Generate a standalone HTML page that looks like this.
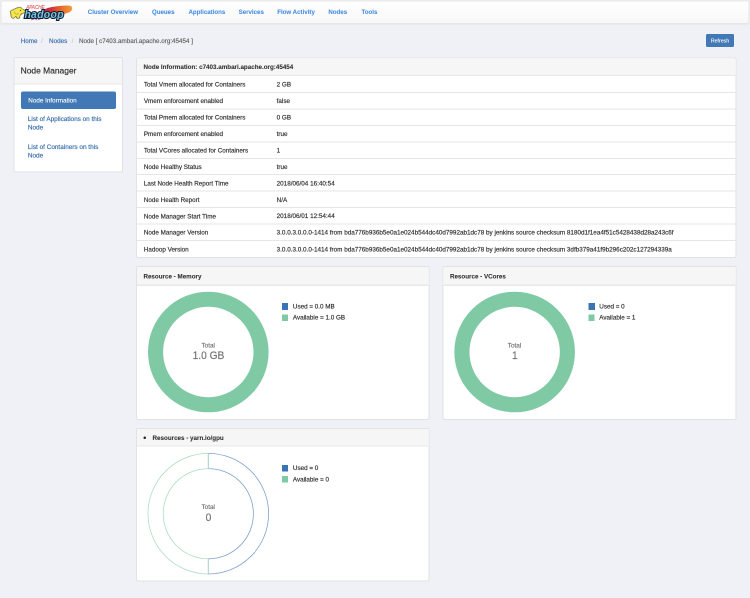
<!DOCTYPE html>
<html><head><meta charset="utf-8">
<style>
*{box-sizing:border-box;margin:0;padding:0}
html,body{width:750px;height:598px;overflow:hidden;background:#f0f1f6}
body{font-family:"Liberation Sans",sans-serif;color:#333;position:relative}
#wrap{position:absolute;left:0;top:0;width:1500px;height:1196px;transform:scale(.5);transform-origin:0 0;will-change:transform;filter:blur(0.7px)}
#z{zoom:2;position:relative;width:750px;height:598px}
.t{position:absolute;white-space:nowrap;-webkit-text-stroke-width:0.18px}
.b{position:absolute}
</style></head><body>
<div id="wrap"><div id="z">
<div class="b" style="left:0.40px;top:0.50px;width:749.20px;height:23.30px;background:linear-gradient(#fff,#f8f8f8);border:1px solid #e6e6e8;border-radius:2px;box-shadow:0 0.6px 1px rgba(0,0,0,.035)"></div>
<span class="t" data-yb="13.85" style="left:87.75px;top:7.96px;font-size:6.15px;line-height:8.61px;color:#4a8fe0;font-weight:bold;-webkit-text-stroke-width:0.08px;">Cluster Overview</span>
<span class="t" data-yb="13.85" style="left:151.95px;top:7.96px;font-size:6.15px;line-height:8.61px;color:#4a8fe0;font-weight:bold;-webkit-text-stroke-width:0.08px;">Queues</span>
<span class="t" data-yb="13.85" style="left:188.45px;top:7.96px;font-size:6.15px;line-height:8.61px;color:#4a8fe0;font-weight:bold;-webkit-text-stroke-width:0.08px;">Applications</span>
<span class="t" data-yb="13.85" style="left:238.60px;top:7.96px;font-size:6.15px;line-height:8.61px;color:#4a8fe0;font-weight:bold;-webkit-text-stroke-width:0.08px;">Services</span>
<span class="t" data-yb="13.85" style="left:277.20px;top:7.96px;font-size:6.15px;line-height:8.61px;color:#4a8fe0;font-weight:bold;-webkit-text-stroke-width:0.08px;">Flow Activity</span>
<span class="t" data-yb="13.85" style="left:328.35px;top:7.96px;font-size:6.15px;line-height:8.61px;color:#4a8fe0;font-weight:bold;-webkit-text-stroke-width:0.08px;">Nodes</span>
<span class="t" data-yb="13.85" style="left:361.50px;top:7.96px;font-size:6.15px;line-height:8.61px;color:#4a8fe0;font-weight:bold;-webkit-text-stroke-width:0.08px;">Tools</span>
<span class="t" data-yb="43.0" style="left:20.75px;top:37.01px;font-size:6.25px;line-height:8.75px;color:#3c71ae;">Home</span>
<span class="t" data-yb="43.0" style="left:41.10px;top:37.06px;font-size:6.2px;line-height:8.68px;color:#c9c9c9;">/</span>
<span class="t" data-yb="43.0" style="left:49.05px;top:36.96px;font-size:6.3px;line-height:8.82px;color:#3c71ae;">Nodes</span>
<span class="t" data-yb="43.0" style="left:71.60px;top:37.06px;font-size:6.2px;line-height:8.68px;color:#c9c9c9;">/</span>
<span class="t" data-yb="43.0" style="left:78.95px;top:36.98px;font-size:6.28px;line-height:8.79px;color:#666;">Node [ c7403.ambari.apache.org:45454 ]</span>
<div class="b" style="left:705.90px;top:33.80px;width:28.10px;height:13.10px;background:#4178b5;border-radius:1.5px"></div>
<span class="t" data-yb="42.35" style="left:660.00px;width:120px;text-align:center;top:37.46px;font-size:5.2px;line-height:7.28px;color:#fff;-webkit-text-stroke-width:0.08px">Refresh</span>
<div class="b" style="left:13.50px;top:57.00px;width:109.70px;height:115.30px;background:#fff;border:1px solid #e2e2e4;border-radius:2px"></div>
<div class="b" style="left:14.50px;top:58.00px;width:107.70px;height:26.30px;background:#f6f6f6;border-bottom:1px solid #e8e8e8;border-radius:1.5px 1.5px 0 0"></div>
<span class="t" data-yb="73.3" style="left:20.60px;top:65.01px;font-size:8.45px;line-height:11.83px;color:#333;">Node Manager</span>
<div class="b" style="left:20.90px;top:91.30px;width:95.10px;height:17.60px;background:#4178b5;border-radius:2px"></div>
<span class="t" data-yb="102.6" style="left:28.30px;top:96.56px;font-size:6.3px;line-height:8.82px;color:#fff;-webkit-text-stroke-width:0.12px">Node Information</span>
<span class="t" data-yb="120.7" style="left:27.85px;top:114.55px;font-size:6.4px;line-height:8.96px;color:#3c71ae;">List of Applications on this</span>
<span class="t" data-yb="129.3" style="left:27.85px;top:123.15px;font-size:6.4px;line-height:8.96px;color:#3c71ae;">Node</span>
<span class="t" data-yb="148.4" style="left:27.85px;top:142.25px;font-size:6.4px;line-height:8.96px;color:#3c71ae;">List of Containers on this</span>
<span class="t" data-yb="157.0" style="left:27.85px;top:150.85px;font-size:6.4px;line-height:8.96px;color:#3c71ae;">Node</span>
<div class="b" style="left:136.20px;top:57.40px;width:600.40px;height:200.80px;background:#fff;border:1px solid #e2e2e4;border-radius:2px"></div>
<div class="b" style="left:137.20px;top:58.40px;width:598.40px;height:17.60px;background:#f6f6f6;border-bottom:1px solid #e8e8e8;border-radius:1.5px 1.5px 0 0"></div>
<span class="t" data-yb="69.0" style="left:143.55px;top:63.01px;font-size:6.25px;line-height:8.75px;color:#333;font-weight:bold;-webkit-text-stroke-width:0.08px;">Node Information: c7403.ambari.apache.org:45454</span>
<div class="b" style="left:137.20px;top:92.00px;width:598.40px;height:1.00px;background:#e6e6e6"></div>
<div class="b" style="left:137.20px;top:108.44px;width:598.40px;height:1.00px;background:#e6e6e6"></div>
<div class="b" style="left:137.20px;top:124.88px;width:598.40px;height:1.00px;background:#e6e6e6"></div>
<div class="b" style="left:137.20px;top:141.32px;width:598.40px;height:1.00px;background:#e6e6e6"></div>
<div class="b" style="left:137.20px;top:157.76px;width:598.40px;height:1.00px;background:#e6e6e6"></div>
<div class="b" style="left:137.20px;top:174.20px;width:598.40px;height:1.00px;background:#e6e6e6"></div>
<div class="b" style="left:137.20px;top:190.64px;width:598.40px;height:1.00px;background:#e6e6e6"></div>
<div class="b" style="left:137.20px;top:207.08px;width:598.40px;height:1.00px;background:#e6e6e6"></div>
<div class="b" style="left:137.20px;top:223.52px;width:598.40px;height:1.00px;background:#e6e6e6"></div>
<div class="b" style="left:137.20px;top:239.96px;width:598.40px;height:1.00px;background:#e6e6e6"></div>
<span class="t" data-yb="86.51" style="left:143.85px;top:80.47px;font-size:6.3px;line-height:8.82px;color:#333;">Total Vmem allocated for Containers</span>
<span class="t" data-yb="86.51" style="left:276.65px;top:80.44px;font-size:6.33px;line-height:8.86px;color:#333;">2 GB</span>
<span class="t" data-yb="103.23" style="left:143.85px;top:97.19px;font-size:6.3px;line-height:8.82px;color:#333;">Vmem enforcement enabled</span>
<span class="t" data-yb="103.23" style="left:276.65px;top:97.16px;font-size:6.33px;line-height:8.86px;color:#333;">false</span>
<span class="t" data-yb="119.67" style="left:143.85px;top:113.63px;font-size:6.3px;line-height:8.82px;color:#333;">Total Pmem allocated for Containers</span>
<span class="t" data-yb="119.67" style="left:276.65px;top:113.60px;font-size:6.33px;line-height:8.86px;color:#333;">0 GB</span>
<span class="t" data-yb="136.10999999999999" style="left:143.85px;top:130.07px;font-size:6.3px;line-height:8.82px;color:#333;">Pmem enforcement enabled</span>
<span class="t" data-yb="136.10999999999999" style="left:276.65px;top:130.04px;font-size:6.33px;line-height:8.86px;color:#333;">true</span>
<span class="t" data-yb="152.54999999999998" style="left:143.85px;top:146.51px;font-size:6.3px;line-height:8.82px;color:#333;">Total VCores allocated for Containers</span>
<span class="t" data-yb="152.54999999999998" style="left:276.65px;top:146.48px;font-size:6.33px;line-height:8.86px;color:#333;">1</span>
<span class="t" data-yb="168.98999999999998" style="left:143.85px;top:162.95px;font-size:6.3px;line-height:8.82px;color:#333;">Node Healthy Status</span>
<span class="t" data-yb="168.98999999999998" style="left:276.65px;top:162.92px;font-size:6.33px;line-height:8.86px;color:#333;">true</span>
<span class="t" data-yb="185.43" style="left:143.85px;top:179.39px;font-size:6.3px;line-height:8.82px;color:#333;">Last Node Health Report Time</span>
<span class="t" data-yb="185.43" style="left:276.65px;top:179.36px;font-size:6.33px;line-height:8.86px;color:#333;">2018/06/04 16:40:54</span>
<span class="t" data-yb="201.87" style="left:143.85px;top:195.83px;font-size:6.3px;line-height:8.82px;color:#333;">Node Health Report</span>
<span class="t" data-yb="201.87" style="left:276.65px;top:195.80px;font-size:6.33px;line-height:8.86px;color:#333;">N/A</span>
<span class="t" data-yb="218.31" style="left:143.85px;top:212.27px;font-size:6.3px;line-height:8.82px;color:#333;">Node Manager Start Time</span>
<span class="t" data-yb="218.31" style="left:276.65px;top:212.24px;font-size:6.33px;line-height:8.86px;color:#333;">2018/06/01 12:54:44</span>
<span class="t" data-yb="234.75" style="left:143.85px;top:228.71px;font-size:6.3px;line-height:8.82px;color:#333;">Node Manager Version</span>
<span class="t" data-yb="234.75" style="left:276.65px;top:228.68px;font-size:6.33px;line-height:8.86px;color:#333;">3.0.0.3.0.0.0-1414 from bda776b936b5e0a1e024b544dc40d7992ab1dc78 by jenkins source checksum 8180d1f1ea4f51c5428438d28a243c6f</span>
<span class="t" data-yb="251.58999999999997" style="left:143.85px;top:245.55px;font-size:6.3px;line-height:8.82px;color:#333;">Hadoop Version</span>
<span class="t" data-yb="251.58999999999997" style="left:276.65px;top:245.52px;font-size:6.33px;line-height:8.86px;color:#333;">3.0.0.3.0.0.0-1414 from bda776b936b5e0a1e024b544dc40d7992ab1dc78 by jenkins source checksum 3dfb379a41f9b296c202c127294339a</span>
<div class="b" style="left:136.20px;top:266.10px;width:293.50px;height:154.00px;background:#fff;border:1px solid #e2e2e4;border-radius:2px"></div>
<div class="b" style="left:137.20px;top:267.10px;width:291.50px;height:18.40px;background:#f6f6f6;border-bottom:1px solid #e8e8e8;border-radius:1.5px 1.5px 0 0"></div>
<span class="t" data-yb="278.26" style="left:143.45px;top:272.27px;font-size:6.25px;line-height:8.75px;color:#333;font-weight:bold;-webkit-text-stroke-width:0.08px;">Resource - Memory</span>
<div class="b" style="left:442.50px;top:266.10px;width:294.10px;height:154.00px;background:#fff;border:1px solid #e2e2e4;border-radius:2px"></div>
<div class="b" style="left:443.50px;top:267.10px;width:292.10px;height:18.40px;background:#f6f6f6;border-bottom:1px solid #e8e8e8;border-radius:1.5px 1.5px 0 0"></div>
<span class="t" data-yb="278.26" style="left:449.95px;top:272.27px;font-size:6.25px;line-height:8.75px;color:#333;font-weight:bold;-webkit-text-stroke-width:0.08px;">Resource - VCores</span>
<div class="b" style="left:136.20px;top:428.10px;width:293.40px;height:153.40px;background:#fff;border:1px solid #e2e2e4;border-radius:2px"></div>
<div class="b" style="left:137.20px;top:429.10px;width:291.40px;height:17.60px;background:#f6f6f6;border-bottom:1px solid #e8e8e8;border-radius:1.5px 1.5px 0 0"></div>
<div class="b" style="left:143.35px;top:436.55px;width:2.50px;height:2.50px;background:#222;border-radius:50%"></div>
<span class="t" data-yb="439.85999999999996" style="left:152.55px;top:433.87px;font-size:6.25px;line-height:8.75px;color:#333;font-weight:bold;-webkit-text-stroke-width:0.08px;">Resources - yarn.io/gpu</span>
<svg class="b" style="left:0;top:0" width="750" height="598" viewBox="0 0 750 598"><circle cx="208.3" cy="352" r="52.75" fill="none" stroke="#7fcaa4" stroke-width="15.1"/><circle cx="514.65" cy="352" r="52.75" fill="none" stroke="#7fcaa4" stroke-width="15.1"/><path d="M208.3 453.40000000000003 A60.3 60.3 0 0 1 208.3 574.0 L208.3 558.8000000000001 A45.1 45.1 0 0 0 208.3 468.6 Z" fill="none" stroke="#82a2cd" stroke-width="0.8"/><path d="M208.3 574.0 A60.3 60.3 0 0 1 208.3 453.40000000000003 L208.3 468.6 A45.1 45.1 0 0 0 208.3 558.8000000000001 Z" fill="none" stroke="#a9dcc1" stroke-width="0.75"/></svg>
<span class="t" data-yb="347.5" style="left:148.20px;width:120px;text-align:center;top:341.40px;font-size:6.35px;line-height:8.89px;color:#747474;transform:scaleY(1.05);transform-origin:50% 6.10px;">Total</span>
<span class="t" data-yb="358.7" style="left:148.50px;width:120px;text-align:center;top:348.58px;font-size:10.2px;line-height:14.28px;color:#747474;transform:scaleY(1.1);transform-origin:50% 10.12px;">1.0 GB</span>
<span class="t" data-yb="347.5" style="left:454.50px;width:120px;text-align:center;top:341.40px;font-size:6.35px;line-height:8.89px;color:#747474;transform:scaleY(1.05);transform-origin:50% 6.10px;">Total</span>
<span class="t" data-yb="358.7" style="left:454.80px;width:120px;text-align:center;top:348.58px;font-size:10.2px;line-height:14.28px;color:#747474;transform:scaleY(1.1);transform-origin:50% 10.12px;">1</span>
<span class="t" data-yb="509.2" style="left:148.20px;width:120px;text-align:center;top:503.10px;font-size:6.35px;line-height:8.89px;color:#747474;transform:scaleY(1.05);transform-origin:50% 6.10px;">Total</span>
<span class="t" data-yb="520.4" style="left:148.50px;width:120px;text-align:center;top:510.28px;font-size:10.2px;line-height:14.28px;color:#747474;transform:scaleY(1.1);transform-origin:50% 10.12px;">0</span>
<div class="b" style="left:281.85px;top:303.20px;width:6.30px;height:6.60px;background:#3b74b4"></div>
<div class="b" style="left:281.85px;top:314.30px;width:6.30px;height:6.60px;background:#7fcaa4"></div>
<span class="t" data-yb="308.4" style="left:292.90px;top:302.36px;font-size:6.3px;line-height:8.82px;color:#333;">Used = 0.0 MB</span>
<span class="t" data-yb="319.6" style="left:292.90px;top:313.56px;font-size:6.3px;line-height:8.82px;color:#333;">Available = 1.0 GB</span>
<div class="b" style="left:588.25px;top:303.20px;width:6.30px;height:6.60px;background:#3b74b4"></div>
<div class="b" style="left:588.25px;top:314.30px;width:6.30px;height:6.60px;background:#7fcaa4"></div>
<span class="t" data-yb="308.4" style="left:599.30px;top:302.36px;font-size:6.3px;line-height:8.82px;color:#333;">Used = 0</span>
<span class="t" data-yb="319.6" style="left:599.30px;top:313.56px;font-size:6.3px;line-height:8.82px;color:#333;">Available = 1</span>
<div class="b" style="left:281.85px;top:465.00px;width:6.30px;height:6.60px;background:#3b74b4"></div>
<div class="b" style="left:281.85px;top:476.10px;width:6.30px;height:6.60px;background:#7fcaa4"></div>
<span class="t" data-yb="470.2" style="left:292.90px;top:464.16px;font-size:6.3px;line-height:8.82px;color:#333;">Used = 0</span>
<span class="t" data-yb="481.40000000000003" style="left:292.90px;top:475.36px;font-size:6.3px;line-height:8.82px;color:#333;">Available = 0</span>
<svg class="b" style="left:0;top:0" width="80" height="24" viewBox="0 0 80 24">
<defs><linearGradient id="sw" x1="40" x2="72" y1="0" y2="0" gradientUnits="userSpaceOnUse"><stop offset="0" stop-color="#a82250"/><stop offset="0.35" stop-color="#d2303a"/><stop offset="0.7" stop-color="#e9712c"/><stop offset="1" stop-color="#f29a3a"/></linearGradient></defs>
<path d="M39 14 C41 10.5 46 8 52 7 C58 6 64 5.4 68.5 5.5 C71.8 5.7 72.8 7.6 71.8 10 C70.5 12.5 66 13.8 60 14.5 C53 15 45 15 39 14 Z" fill="url(#sw)"/>
<path d="M29 18.8 L33 17.6 L36.5 19.6 L35.5 17.8 L40.5 18.3 M31 20 L34.5 18.9 M38 19.8 L41 18.6" stroke="#8e3fa0" stroke-width="0.8" fill="none" opacity="0.85"/>
<text x="26.2" y="8.7" font-family="Liberation Sans" font-style="italic" font-size="4.6" fill="#e2585e" stroke="#e2585e" stroke-width="0.12" letter-spacing="-0.05">APACHE</text>
<text x="24.4" y="17.9" font-family="Liberation Sans" font-weight="bold" font-style="italic" font-size="10.4" fill="#72c3e6" stroke="#141c28" stroke-width="2.1" paint-order="stroke" letter-spacing="0.32">hadoop</text>
<path d="M10.2 11.3 C11 10.6 12.5 9.9 14.5 9 C16 8.2 17.5 7.5 19.5 7.3 C20.7 7.3 21.8 7.8 22.8 9.3 C23.6 9.8 24.4 9.9 24.9 10.2 C25.2 11 25.1 12 24.9 12.8 C24 13 23.2 13.3 22.6 13.6 C22 14 21.5 14.4 21 14.6 C20.3 15 19.9 15.6 19.8 16.3 L19.5 18.1 C18.6 18.4 17.7 18.4 16.8 18.3 L16.2 16.3 C15.8 16.6 15.3 16.8 14.9 17 L14.5 17.8 C14 18.3 13.3 18.4 12.8 18.3 C12 18 11.5 17.6 11.3 17.2 C11.1 16.2 10.9 15.2 10.8 14.2 C10.6 13.2 10.4 12.2 10.2 11.3 Z" fill="#f5e64c" stroke="#3e3a1e" stroke-width="0.6"/>
<path d="M14.6 11.6 C14.4 13 15 14 16.2 14.2 C17.3 14.3 18.4 14 18.8 13.2" fill="none" stroke="#8a7f2a" stroke-width="0.5"/>
<path d="M20.6 14.1 L22 13.5" stroke="#3e3a1e" stroke-width="0.5"/>
<circle cx="20.4" cy="10.4" r="0.55" fill="#3a3520"/>
</svg>

</div></div>
</body></html>
